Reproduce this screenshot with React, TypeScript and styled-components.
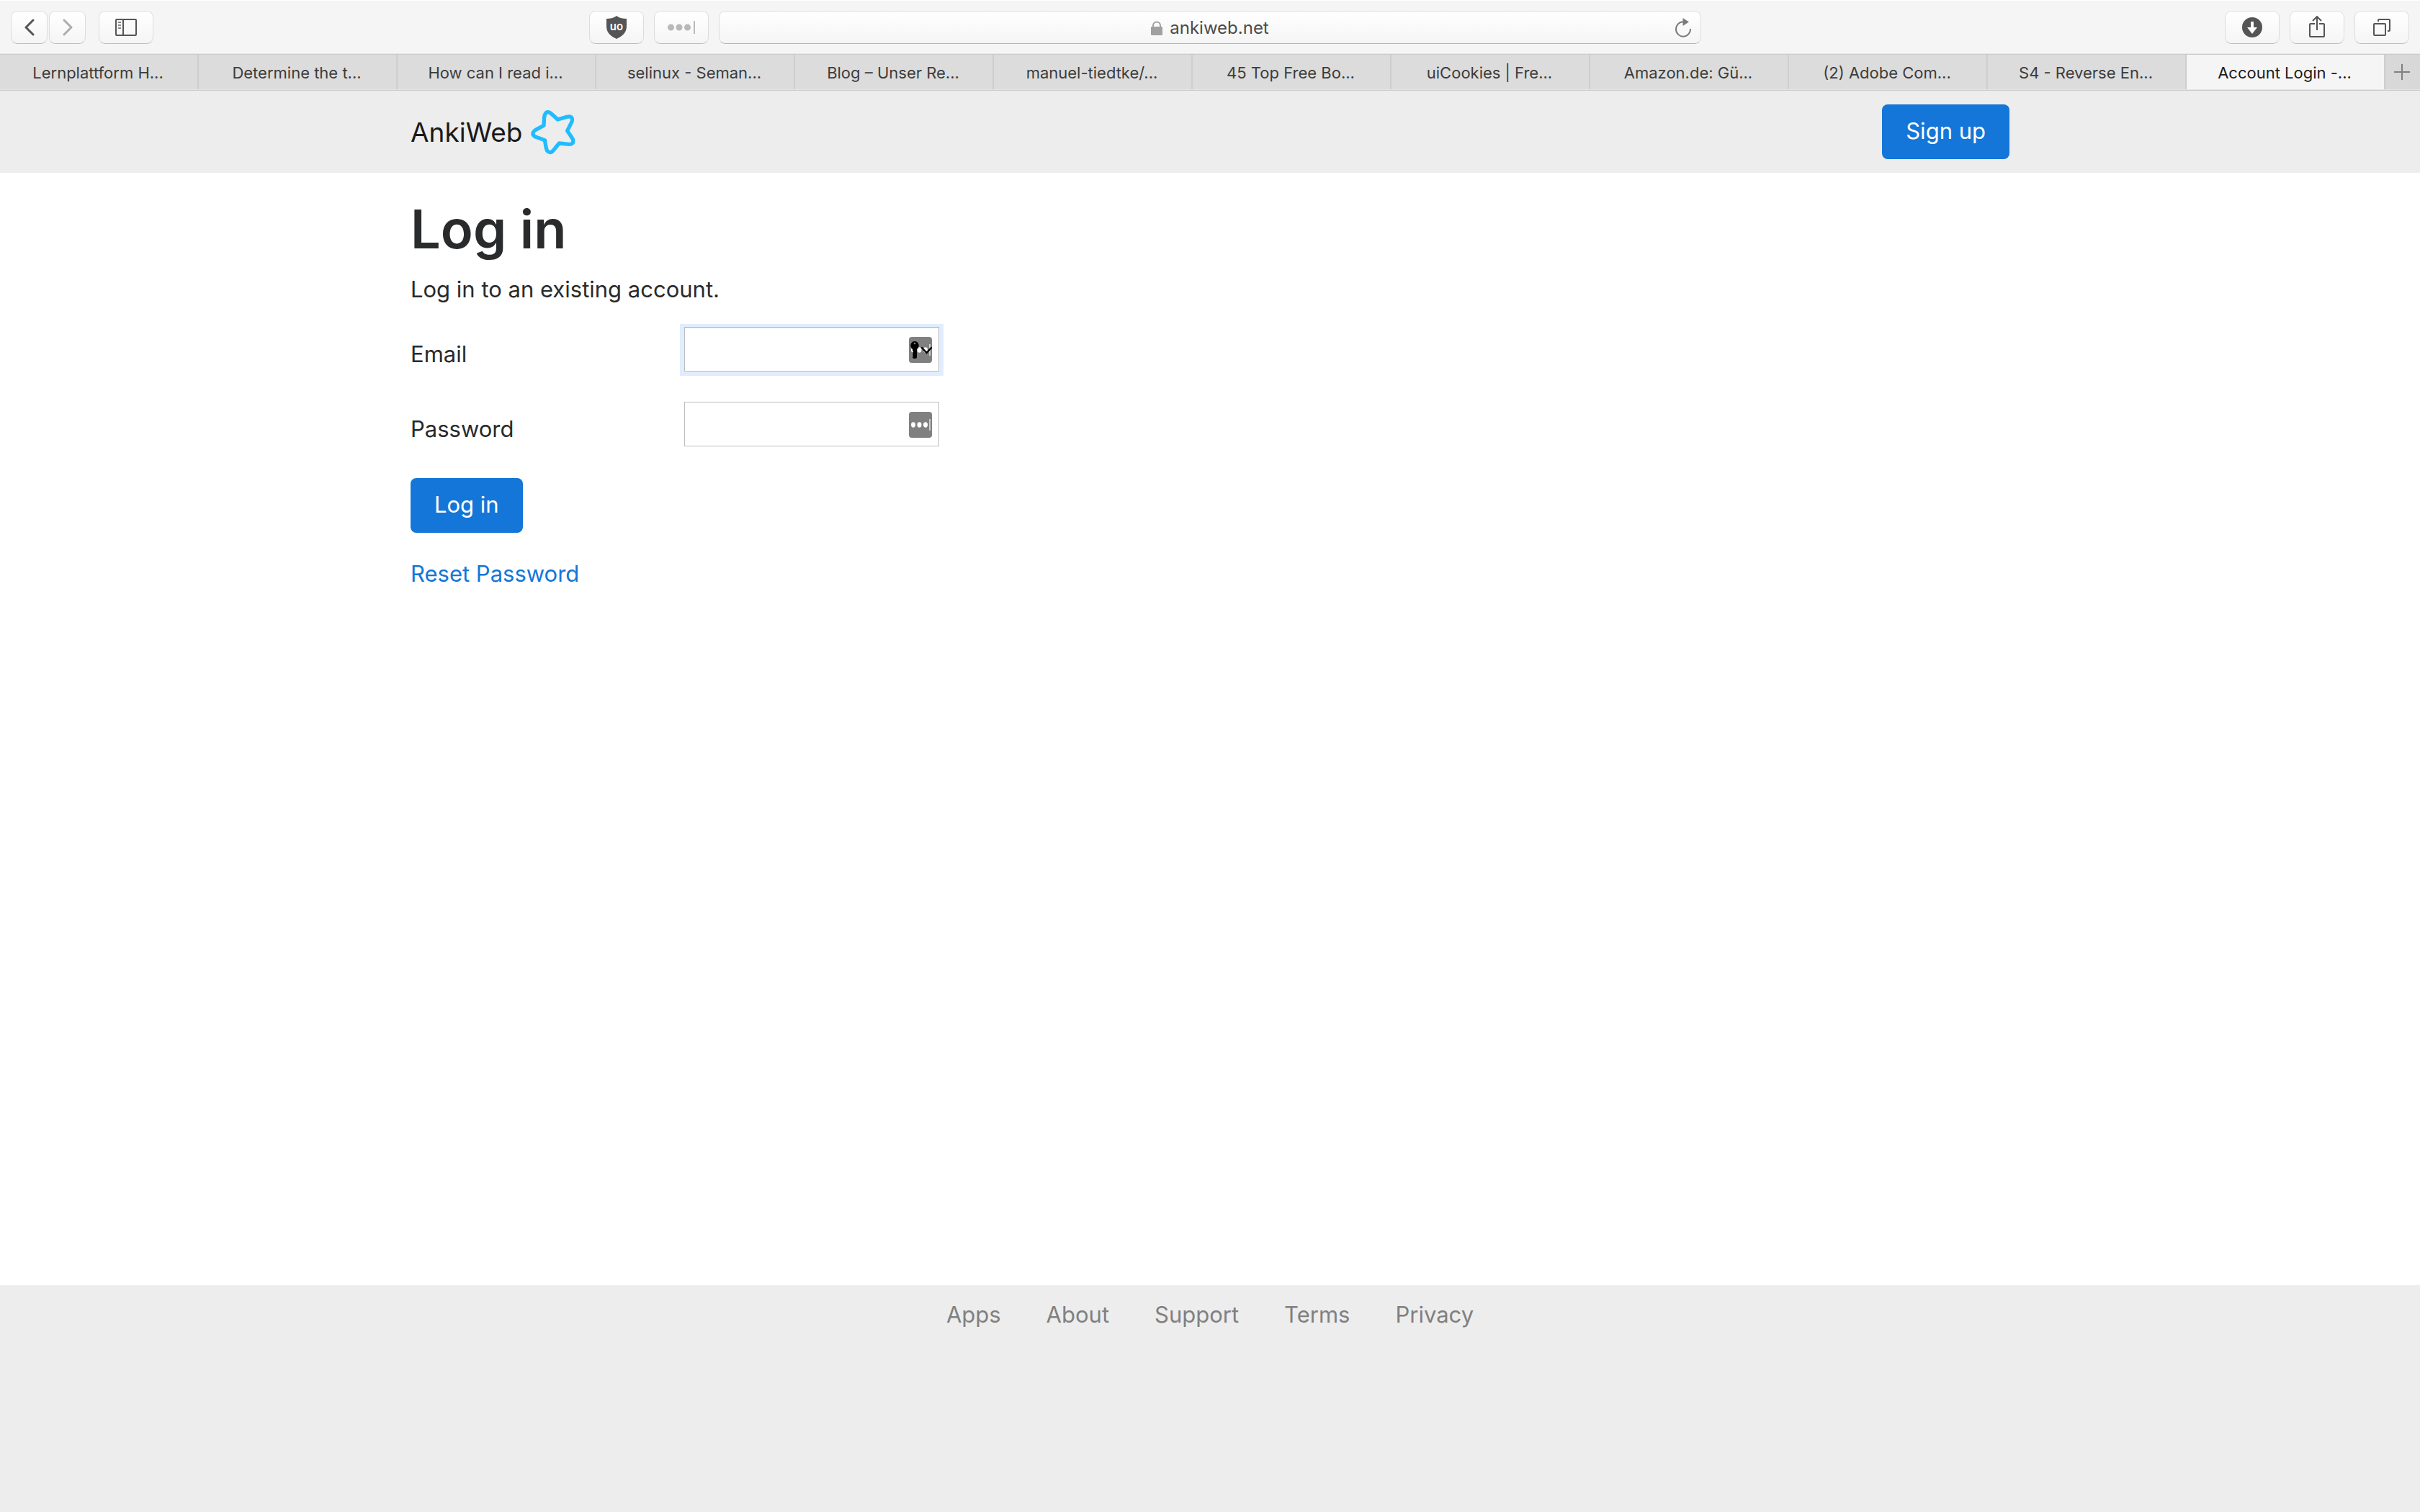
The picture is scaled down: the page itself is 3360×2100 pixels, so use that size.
import React from "react";
import styled, { createGlobalStyle } from "styled-components";

const GlobalStyle = createGlobalStyle`
  *, *::before, *::after { box-sizing: border-box; }
  body {
    margin: 0;
    background: #fff;
    color: #292b2c;
    font-family: Inter, Roboto, "Liberation Sans", sans-serif;
    font-size: 31px;
    line-height: 48px;
  }
  button, input { font: inherit; color: inherit; }
  a { text-decoration: none; color: inherit; }
  svg { display: block; }
`;

const Page = styled.div`
  min-height: 100vh;
  display: flex;
  flex-direction: column;
`;

/* Browser toolbar */

const Toolbar = styled.div`
  display: grid;
  grid-template-columns: 1fr minmax(0, 1364px) 1fr;
  gap: 14px;
  padding: 15px 15px 14px;
  background: #f5f5f5;
  border-bottom: 1px solid #cbcbcb;
  box-shadow: inset 0 1px 0 #fff, inset 0 -1px 0 #e6e6e6;
`;

const ToolbarSide = styled.div<{ $align?: string }>`
  display: flex;
  justify-content: ${(p) => p.$align ?? "space-between"};
  gap: 14px;
`;

const ButtonGroup = styled.div<{ $gap: number }>`
  display: flex;
  gap: ${(p) => p.$gap}px;
`;

const ToolButton = styled.button<{ $narrow?: boolean }>`
  width: ${(p) => (p.$narrow ? 51 : 76)}px;
  height: 46px;
  padding: 0;
  display: flex;
  align-items: center;
  justify-content: center;
  border: 1px solid #dcdcdc;
  border-bottom-color: #bdbdbd;
  border-radius: 9px;
  background: linear-gradient(#fff, #f5f5f5);
`;

const AddressBar = styled.div`
  height: 46px;
  display: grid;
  grid-template-columns: 1fr auto 1fr;
  align-items: center;
  padding: 1px 13px 0;
  border: 1px solid #dcdcdc;
  border-bottom-color: #b5b5b5;
  border-radius: 9px;
  background: linear-gradient(#fff, #f5f5f5);
`;

const Address = styled.div`
  grid-column: 2;
  display: flex;
  align-items: center;
  gap: 10px;
  color: #4b4b4b;
  font-size: 24px;
  line-height: 32px;
`;

const ReloadButton = styled.button`
  justify-self: end;
  padding: 0;
  border: 0;
  background: none;
`;

/* Browser tabs */

const TabStrip = styled.div`
  display: flex;
  height: 50px;
  background: #dcdcdc;
  border-bottom: 1px solid #c9c9c9;
  box-shadow: inset 0 -1px 0 #e4e4e4;
`;

const Tab = styled.button<{ $active?: boolean }>`
  flex: 1 1 0;
  min-width: 0;
  padding: 2px 2px 0 0;
  border: 0;
  border-right: 2px solid #cecece;
  margin-bottom: 1px;
  background: ${(p) => (p.$active ? "#f5f5f5" : "transparent")};
  color: ${(p) => (p.$active ? "#1d1d1d" : "#3c3c3c")};
  font-size: 22px;
  line-height: 32px;
  white-space: nowrap;
`;

const NewTab = styled.button`
  flex: 0 0 48px;
  display: flex;
  align-items: center;
  justify-content: center;
  margin-bottom: 1px;
  padding: 0 2px 0 0;
  border: 0;
  background: #d8d8d8;
`;

/* Site */

const Container = styled.div`
  width: 100%;
  max-width: 2280px;
  margin: 0 auto;
  padding: 0 30px;
`;

const Header = styled.header`
  background: #ededed;
  padding: 19px 0;
`;

const HeaderRow = styled(Container)`
  display: flex;
  align-items: center;
  justify-content: space-between;
`;

const Brand = styled.a`
  display: flex;
  align-items: center;
  gap: 12px;
  padding-top: 2px;
  color: #1a1a1a;
  font-size: 37px;
`;

const PrimaryButton = styled.button`
  display: block;
  height: 76px;
  padding: 0 33px 2px;
  border: 0;
  border-radius: 8px;
  background: #1476d8;
  color: #fff;
`;

const Main = styled.main`
  flex: 1;
  padding: 30px 0 64px;
`;

const Title = styled.h1`
  margin: 0 0 12px;
  font-size: 74px;
  line-height: 96px;
  font-weight: 600;
`;

const Lead = styled.p`
  margin: 0 0 28px;
`;

const Field = styled.div`
  display: grid;
  grid-template-columns: 380px 354px;
  align-items: start;
  margin-bottom: 42px;
`;

const Label = styled.label`
  padding-top: 14px;
`;

const InputBox = styled.div`
  position: relative;
`;

const TextInput = styled.input<{ $focused?: boolean }>`
  display: block;
  width: 100%;
  height: 62px;
  padding: 0 52px 0 12px;
  border: 1px solid #bdbdbd;
  border-top-color: ${(p) => (p.$focused ? "#a9b8cd" : "#bdbdbd")};
  border-radius: 0;
  outline: 0;
  background: #fff;
  box-shadow: ${(p) =>
    p.$focused
      ? "1px 1px 0 5px #e1edfe, -1px 1px 0 5px #e1edfe, inset 0 1px 0 #e1edfe"
      : "none"};
`;

const Badge = styled.span`
  position: absolute;
  top: 14px;
  right: 10px;
`;

const Actions = styled.div`
  padding-top: 2px;
  margin-bottom: 33px;
`;

const TextLink = styled.a`
  color: #1476d8;
`;

const Footer = styled.footer`
  min-height: 15vh;
  padding: 17px 0;
  background: #ededed;
  color: #808080;
`;

const FooterNav = styled.nav`
  display: flex;
  justify-content: center;
  gap: 63px;
`;

/* Icons */

const Chevron = ({ forward }: { forward?: boolean }) => (
  <svg width="14" height="24" viewBox="0 0 14 24" fill="none" stroke={forward ? "#adadad" : "#555"} strokeWidth="3" strokeLinecap="round" strokeLinejoin="round">
    <path d={forward ? "M2 2L12 12L2 22" : "M12 2L2 12L12 22"} />
  </svg>
);

const SidebarIcon = () => (
  <svg width="30" height="24" viewBox="0 0 30 24" fill="none" stroke="#555" strokeWidth="2">
    <rect x="1" y="1" width="28" height="22" rx="1" />
    <path d="M11 1V23" />
    <path d="M4 5H8M4 9H8M4 13H8" stroke="#888" />
  </svg>
);

const ShieldIcon = () => (
  <svg width="28" height="32" viewBox="0 0 28 32">
    <path d="M14 0C10 3 5 4 0 4V14C0 24 6 28 14 32C22 28 28 24 28 14V4C23 4 18 3 14 0Z" fill="#555" />
    <text x="14" y="20" textAnchor="middle" fontSize="15" fontWeight="600" fill="#fff">uo</text>
  </svg>
);

const DotsIcon = () => (
  <svg width="38" height="20" viewBox="0 0 38 20" fill="#b9b9b9">
    <circle cx="4.5" cy="10" r="4.5" />
    <circle cx="16" cy="10" r="4.5" />
    <circle cx="27.5" cy="10" r="4.5" />
    <rect x="36" y="1" width="2" height="18" />
  </svg>
);

const LockIcon = () => (
  <svg width="16" height="20" viewBox="0 0 16 20">
    <path d="M3 9V6.5C3 -.2 13 -.2 13 6.5V9" fill="none" stroke="#a0a0a0" strokeWidth="2" />
    <rect y="8" width="16" height="12" rx="1" fill="#a0a0a0" />
  </svg>
);

const ReloadIcon = () => (
  <svg width="22" height="27" viewBox="0 0 22 27">
    <path d="M13 5.3H11A10 10.2 0 1 0 21 15" fill="none" stroke="#7b7b7b" strokeWidth="2" />
    <path d="M10.5 0L19 5.5L10.5 11Z" fill="#7b7b7b" />
  </svg>
);

const DownloadIcon = () => (
  <svg width="28" height="28" viewBox="0 0 28 28">
    <circle cx="14" cy="14" r="14" fill="#555" />
    <path d="M12 6H16V14H21L14 23L7 14H12Z" fill="#fff" />
  </svg>
);

const ShareIcon = () => (
  <svg width="22" height="32" viewBox="0 0 22 32" fill="none" stroke="#555" strokeWidth="2">
    <path d="M8 11H2Q1 11 1 12V28Q1 29 2 29H20Q21 29 21 28V12Q21 11 20 11H14" />
    <path d="M11 20V1M5 7L11 1L17 7" />
  </svg>
);

const OverviewIcon = () => (
  <svg width="24" height="24" viewBox="0 0 24 24" fill="none" stroke="#555" strokeWidth="2">
    <rect x="1" y="7" width="16" height="16" rx="1" />
    <path d="M7 4V2Q7 1 8 1H22Q23 1 23 2V16Q23 17 22 17H20" />
  </svg>
);

const PlusIcon = () => (
  <svg width="22" height="22" viewBox="0 0 22 22" stroke="#808080" strokeWidth="2">
    <path d="M11 0V22M0 11H22" />
  </svg>
);

const StarLogo = () => (
  <svg width="62" height="62" viewBox="588 99 186 186" fill="none" stroke="#21bcff" strokeWidth="16" strokeLinejoin="round">
    <path d="M700 138L738 127Q766 121 759 147Q750 165 740 185Q752 202 763 220Q769 242 747 241L706 237Q695 250 685 263Q669 284 656 268Q650 256 647 225Q630 218 609 211Q587 200 604 184Q620 174 642 163L644 127Q649 98 670 111Q685 124 700 138Z" />
  </svg>
);

const PasswordBadge = ({ withKey }: { withKey?: boolean }) => (
  <svg width="32" height="36" viewBox="0 0 32 36">
    <rect width="32" height="36" rx="4" fill="#808080" />
    <g fill="#fff">
      <ellipse cx="6" cy="18" rx="3" ry="3.7" />
      <ellipse cx="14.5" cy="18" rx="3" ry="3.7" />
      <ellipse cx="23" cy="18" rx="3" ry="3.7" />
      <rect x="28" y="10" width="2" height="16" fill="#ccc" />
    </g>
    {withKey && (
      <g>
        <path d="M8 6A6 6 0 0 1 11 17V28Q11 30 8 30Q5 30 5 28L6 26.500L5 25L6 23.500L5 22L6 20.500L5 19V17A6 6 0 0 1 8 6Z" />
        <circle cx="8" cy="9" r="1.300" fill="#808080" />
        <path d="M18 15L24.500 22L31 15" fill="none" stroke="#000" strokeWidth="2.500" strokeLinecap="round" />
      </g>
    )}
  </svg>
);

const tabs = [
  "Lernplattform H...",
  "Determine the t...",
  "How can I read i...",
  "selinux - Seman...",
  "Blog – Unser Re...",
  "manuel-tiedtke/...",
  "45 Top Free Bo...",
  "uiCookies | Fre...",
  "Amazon.de: Gü...",
  "(2) Adobe Com...",
  "S4 - Reverse En...",
  "Account Login -...",
];

const footerLinks = ["Apps", "About", "Support", "Terms", "Privacy"];

export default function App() {
  return (
    <Page>
      <GlobalStyle />
      <Toolbar>
        <ToolbarSide>
          <ButtonGroup $gap={18}>
            <ButtonGroup $gap={2}>
              <ToolButton $narrow aria-label="Back"><Chevron /></ToolButton>
              <ToolButton $narrow aria-label="Forward"><Chevron forward /></ToolButton>
            </ButtonGroup>
            <ToolButton aria-label="Show sidebar"><SidebarIcon /></ToolButton>
          </ButtonGroup>
          <ButtonGroup $gap={14}>
            <ToolButton aria-label="Content blocker"><ShieldIcon /></ToolButton>
            <ToolButton aria-label="Password manager"><DotsIcon /></ToolButton>
          </ButtonGroup>
        </ToolbarSide>
        <AddressBar>
          <Address><LockIcon />ankiweb.net</Address>
          <ReloadButton aria-label="Reload"><ReloadIcon /></ReloadButton>
        </AddressBar>
        <ToolbarSide $align="flex-end">
          <ToolButton aria-label="Downloads"><DownloadIcon /></ToolButton>
          <ToolButton aria-label="Share"><ShareIcon /></ToolButton>
          <ToolButton aria-label="Tab overview"><OverviewIcon /></ToolButton>
        </ToolbarSide>
      </Toolbar>
      <TabStrip>
        {tabs.map((title, i) => (
          <Tab key={title} $active={i === tabs.length - 1}>{title}</Tab>
        ))}
        <NewTab aria-label="New tab"><PlusIcon /></NewTab>
      </TabStrip>

      <Header>
        <HeaderRow>
          <Brand href="#">AnkiWeb<StarLogo /></Brand>
          <PrimaryButton type="button">Sign up</PrimaryButton>
        </HeaderRow>
      </Header>

      <Main>
        <Container>
          <Title>Log in</Title>
          <Lead>Log in to an existing account.</Lead>
          <form onSubmit={(e) => e.preventDefault()}>
            <Field>
              <Label htmlFor="email">Email</Label>
              <InputBox>
                <TextInput id="email" type="email" $focused />
                <Badge><PasswordBadge withKey /></Badge>
              </InputBox>
            </Field>
            <Field>
              <Label htmlFor="password">Password</Label>
              <InputBox>
                <TextInput id="password" type="password" />
                <Badge><PasswordBadge /></Badge>
              </InputBox>
            </Field>
            <Actions>
              <PrimaryButton type="submit">Log in</PrimaryButton>
            </Actions>
          </form>
          <TextLink href="#">Reset Password</TextLink>
        </Container>
      </Main>

      <Footer>
        <FooterNav>
          {footerLinks.map((name) => (
            <a key={name} href="#">{name}</a>
          ))}
        </FooterNav>
      </Footer>
    </Page>
  );
}
